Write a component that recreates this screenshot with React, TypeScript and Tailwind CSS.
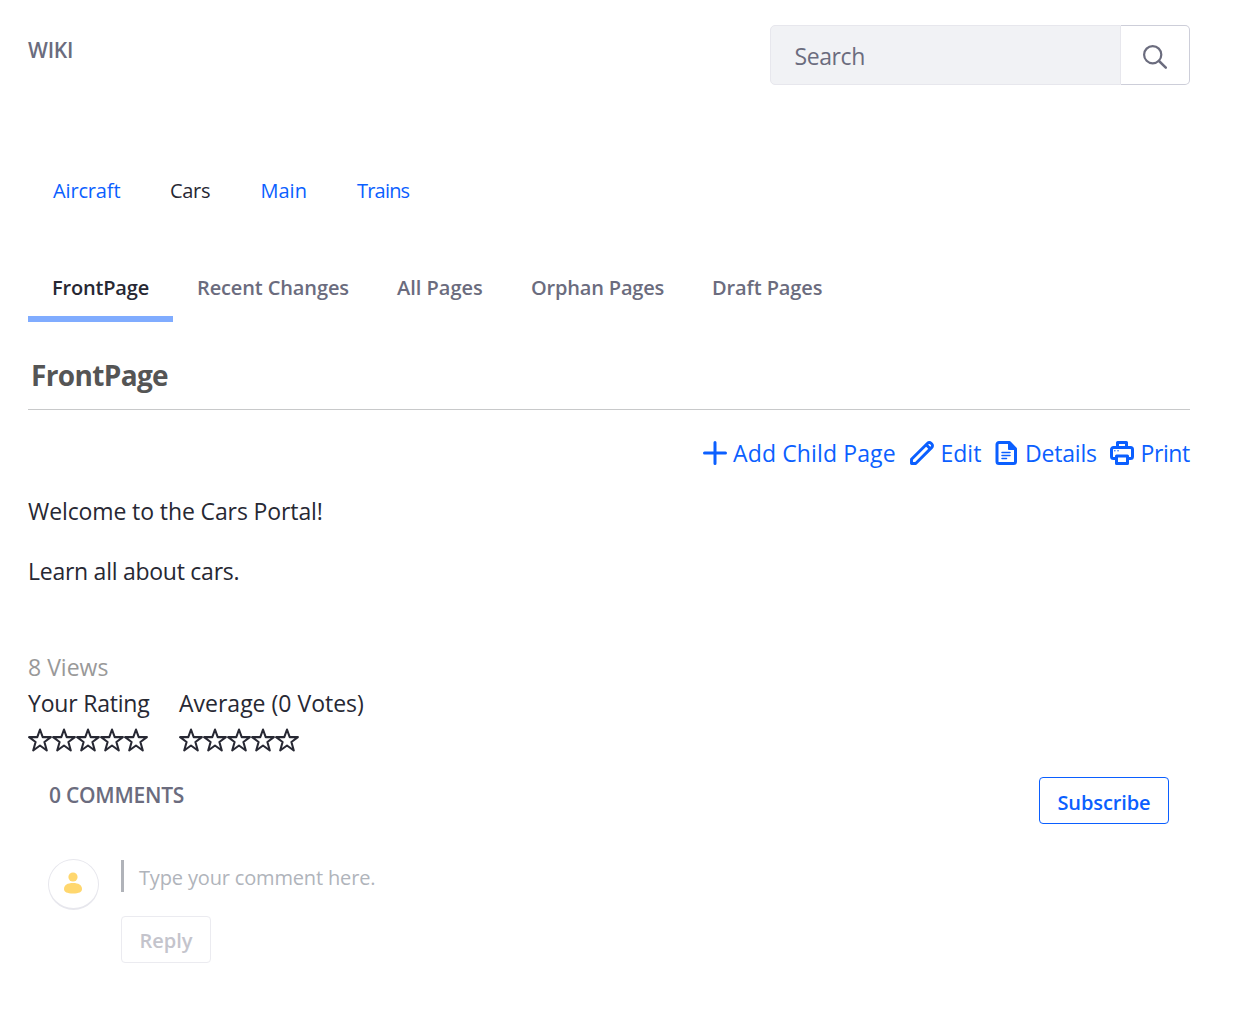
import { type ReactNode } from 'react';

function Icon({ children, className = 'size-6' }: { children: ReactNode; className?: string }) {
  return (
    <svg viewBox="0 0 24 24" fill="none" stroke="currentColor" strokeLinecap="round" strokeLinejoin="round" className={`shrink-0 ${className}`}>
      {children}
    </svg>
  );
}

const SearchIcon = () => (
  <Icon>
    <circle cx="9.7" cy="9.7" r="8.6" strokeWidth="2.2" />
    <path d="M16 16l6.8 6.6" strokeWidth="2.5" />
  </Icon>
);

const PlusIcon = () => (
  <Icon>
    <path d="M12 1.5v21M1.5 12h21" strokeWidth="3" />
  </Icon>
);

const PencilIcon = () => (
  <Icon>
    <path d="M1.5 22.5v-4.2L17.6 2.2a2.4 2.4 0 0 1 3.4 0l.8.8a2.4 2.4 0 0 1 0 3.4L5.7 22.5z" strokeWidth="2.9" />
    <path d="M16.5 4l3.5 3.5" strokeWidth="3" />
  </Icon>
);

const DocumentIcon = () => (
  <Icon>
    <path d="M4 1.5h10.5l6 6.300v12.700a2 2 0 0 1-2 2H4a2 2 0 0 1-2-2v-17a2 2 0 0 1 2-2z" strokeWidth="3" />
    <path d="M13.5 1.5v7h7z" fill="currentColor" strokeWidth="1" />
    <path d="M7 11.5h8M7 14.5h8M7 17.5h4.5" strokeWidth="1.5" />
  </Icon>
);

const PrinterIcon = () => (
  <Icon>
    <path d="M7.5 5.5v-4h9v4" strokeWidth="3" />
    <path d="M5 17.5H3.5a2 2 0 0 1-2-2v-7a2 2 0 0 1 2-2h17a2 2 0 0 1 2 2v7a2 2 0 0 1-2 2H19" strokeWidth="3" />
    <path d="M6.5 15h11v7.5h-11z" strokeWidth="3" />
    <path d="M4.800 9.700h.1M8 9.700h.1" strokeWidth="1.4" />
  </Icon>
);

const StarIcon = () => (
  <Icon>
    <path d="M12 1.500l2.700 7.600h8.200l-6.500 4.900 2.400 8.500L12 17.500l-6.800 5 2.400-8.500-6.500-4.900h8.200z" strokeWidth="2.050" />
  </Icon>
);

const spaces = [
  { name: 'Aircraft', className: 'w-[117px] tracking-[-0.15px]' },
  { name: 'Cars', className: 'w-[90.5px] tracking-[-0.3px] text-[#272833]' },
  { name: 'Main', className: 'w-[96.5px]' },
  { name: 'Trains', className: 'tracking-[-0.8px]' },
];

const tabs = [
  { name: 'FrontPage', className: 'w-[145px] tracking-[-0.18px] text-[#272833] border-[#80acff]' },
  { name: 'Recent Changes', className: 'w-[200px] tracking-[-0.12px] border-transparent' },
  { name: 'All Pages', className: 'w-[134px] border-transparent' },
  { name: 'Orphan Pages', className: 'w-[181px] tracking-[-0.18px] border-transparent' },
  { name: 'Draft Pages', className: 'w-[159px] tracking-[-0.1px] border-transparent' },
];

const actions = [
  { name: 'Add Child Page', icon: <PlusIcon />, className: 'w-[164px] tracking-[0.13px]' },
  { name: 'Edit', icon: <PencilIcon />, className: 'w-[42px] pl-[0.5px]' },
  { name: 'Details', icon: <DocumentIcon />, className: 'w-[72px] tracking-[-0.2px]' },
  { name: 'Print', icon: <PrinterIcon />, className: 'w-[50px] pl-[0.5px] tracking-[-0.4px]' },
];

function Stars() {
  return (
    <div className="flex pt-[7px]">
      {[1, 2, 3, 4, 5].map((n) => (
        <StarIcon key={n} />
      ))}
    </div>
  );
}

export default function App() {
  return (
    <main className="h-[1013px] w-[1252px] overflow-hidden bg-white pr-[62px] pl-7 font-['Open_Sans',sans-serif] text-[23px] leading-9 whitespace-nowrap text-[#272833]">
      <header className="flex items-start justify-between pt-[25px]">
        <h1 className="pt-[10px] text-[21px] leading-[30px] font-semibold tracking-[-0.2px] text-[#6b6c7e]">WIKI</h1>
        <form className="flex h-[60px] w-[420px]">
          <input
            placeholder="Search"
            className="w-[351px] rounded-l-[5px] border border-[#e7e7ed] bg-[#f1f2f5] px-[23.5px] pt-[2px] tracking-[-0.4px] outline-none placeholder:text-[#6b6c7e]"
          />
          <button type="button" aria-label="Search" className="flex flex-1 items-center justify-center rounded-r-[5px] border border-l-0 border-[#cdced9] pt-[3px] text-[#6b6c7e]">
            <SearchIcon />
          </button>
        </form>
      </header>

      <nav className="mt-[90px] flex pl-[25px] text-xl leading-8 text-[#0b5fff]">
        {spaces.map((s) => (
          <a key={s.name} className={s.className}>
            {s.name}
          </a>
        ))}
      </nav>

      <nav className="mt-[65px] flex text-xl leading-8 font-semibold text-[#6b6c7e]">
        {tabs.map((t) => (
          <a key={t.name} className={`h-[50px] border-b-[6px] pl-6 ${t.className}`}>
            {t.name}
          </a>
        ))}
      </nav>

      <h2 className="mt-[33px] h-[55px] border-b border-[#c8c9ca] pl-[3px] text-[28px] leading-10 font-bold tracking-[-0.65px] text-[#555]">FrontPage</h2>

      <div className="mt-[25px] flex justify-end gap-[13px] text-[#0b5fff]">
        {actions.map((a) => (
          <a key={a.name} className="flex items-center gap-[6px]">
            {a.icon}
            <span className={a.className}>{a.name}</span>
          </a>
        ))}
      </div>

      <article className="mt-[22px] space-y-6">
        <p className="tracking-[-0.11px]">Welcome to the Cars Portal!</p>
        <p className="tracking-[-0.26px]">Learn all about cars.</p>
      </article>

      <p className="mt-[60px] text-[#999]">8 Views</p>
      <section className="flex">
        <div className="w-[151px]">
          <p className="tracking-[-0.2px]">Your Rating</p>
          <Stars />
        </div>
        <div>
          <p>Average (0 Votes)</p>
          <Stars />
        </div>
      </section>

      <section className="px-[21px] pt-[25px] text-xl">
        <div className="flex items-start justify-between">
          <h3 className="pt-[3px] text-[21px] leading-[30px] font-semibold tracking-[-0.25px] text-[#6b6c7e]">0 COMMENTS</h3>
          <button className="h-[47px] w-[130px] rounded-[4px] border border-[#0b5fff] pt-1 leading-8 font-semibold tracking-[-0.1px] text-[#0b5fff]">Subscribe</button>
        </div>
        <div className="mt-[35px] -ml-px flex">
          <div className="flex size-[50.5px] items-center justify-center rounded-full border border-b-2 border-[#e7e7ed] pr-px text-[#ffd76e]">
            <Icon>
              <circle cx="12" cy="5" r="4.6" fill="currentColor" stroke="none" />
              <path d="M3 17c0-4 3.600-6 9-6s9 2 9 6c0 3-3 4.500-9 4.500S3 20 3 17z" fill="currentColor" stroke="none" />
            </Icon>
          </div>
          <div className="ml-[22.5px] pt-px">
            <div className="h-8 border-l-[3px] border-[#b0b3b9] pl-[15px] leading-[35px] tracking-[-0.16px] text-[#b0b4bb]">Type your comment here.</div>
            <button className="mt-6 h-[47px] w-[90px] rounded-[4px] border border-[#ebebf0] pt-[3px] leading-8 font-semibold text-[#c4c4cc]">Reply</button>
          </div>
        </div>
      </section>
    </main>
  );
}
